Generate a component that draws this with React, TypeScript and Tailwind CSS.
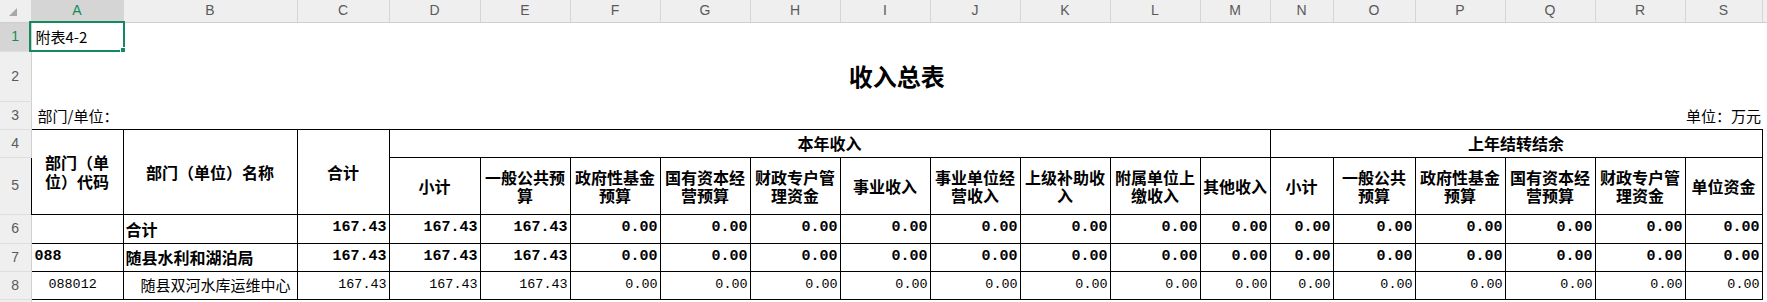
import React from 'react';

const colWidths = [
	'w-[31px]', 'w-[92px]', 'w-[174px]', 'w-[92px]', 'w-[91px]',
	'w-[90px]', 'w-[90px]', 'w-[90px]', 'w-[90px]', 'w-[90px]', 'w-[90px]', 'w-[90px]', 'w-[90px]',
	'w-[70px]', 'w-[63px]', 'w-[82px]', 'w-[90px]', 'w-[90px]', 'w-[90px]', 'w-[77px]', 'w-[5px]'
];

const letters = 'ABCDEFGHIJKLMNOPQRST'.split('');

const subHeads = [
	['小计'],
	['一般公共预', '算'],
	['政府性基金', '预算'],
	['国有资本经', '营预算'],
	['财政专户管', '理资金'],
	['事业收入'],
	['事业单位经', '营收入'],
	['上级补助收', '入'],
	['附属单位上', '缴收入'],
	['其他收入'],
	['小计'],
	['一般公共', '预算'],
	['政府性基金', '预算'],
	['国有资本经', '营预算'],
	['财政专户管', '理资金'],
	['单位资金']
];

const values = ['167.43', '167.43', '167.43', ...Array(14).fill('0.00')];

const rows = [
	{ code: '', name: '合计', bold: true, h: 'h-[29px]' },
	{ code: '088', name: '随县水利和湖泊局', bold: true, h: 'h-[28px]' },
	{ code: '088012', name: '随县双河水库运维中心', bold: false, h: 'h-[28px]' }
];

const cjk = "font-['Noto_Sans_CJK_SC',sans-serif]";
const mono = "font-['Liberation_Mono','Noto_Sans_CJK_SC',monospace]";
const cell = 'border border-black p-0';

function RowHead({ n, active }: { n?: number; active?: boolean }) {
	return (
		<td
			className={`border-r border-b border-r-[#cfcfcf] border-b-[#dedede] p-0 text-center align-middle font-['Liberation_Sans',sans-serif] text-[14px] ${
				active ? 'bg-[#d5d5d5] text-[#138a5e]' : 'bg-[#efefef] text-[#5a5a5a]'
			}`}
		>
			{n}
		</td>
	);
}

function Lines({ lines }: { lines: string[] }) {
	return (
		<>
			{lines.map((l, i) => (
				<div key={i}>{l}</div>
			))}
		</>
	);
}

export default function App() {
	return (
		<div className="relative h-[302px] w-[1767px] overflow-hidden bg-white text-black">
			<table className="w-[1767px] table-fixed border-collapse">
				<colgroup>
					{colWidths.map((w, i) => (
						<col key={i} className={w} />
					))}
				</colgroup>
				<tbody>
					<tr className="h-[22px]">
						<td className="border-r border-b border-r-[#d6d6d6] border-b-[#cfcfcf] bg-[#efefef] p-0">
							<div className="flex h-full items-center justify-center">
								<svg width="8" height="8" viewBox="0 0 8 8" className="ml-[-4px] mt-[2px]">
									<polygon points="8,0 8,8 0,8" fill="#a8a8a8" />
								</svg>
							</div>
						</td>
						{letters.map((l, i) => (
							<td
								key={l}
								className={`overflow-hidden border-r border-b border-r-[#d6d6d6] border-b-[#cfcfcf] p-0 text-center font-['Liberation_Sans',sans-serif] text-[14px] ${
									i === 0 ? 'bg-[#d5d5d5] text-[#138a5e]' : 'bg-[#efefef] text-[#5a5a5a]'
								}`}
							>
								{i < 19 ? l : ''}
							</td>
						))}
					</tr>

					<tr className="h-[29px]">
						<RowHead n={1} active />
						<td className={`p-0 pl-[4px] text-[15px] ${cjk}`}>附表4-2</td>
						<td colSpan={19} />
					</tr>

					<tr className="h-[50px]">
						<RowHead n={2} />
						<td colSpan={19} className={`p-0 text-center text-[24px] font-semibold ${cjk}`}>
							收入总表
						</td>
						<td />
					</tr>

					<tr className="h-[28px]">
						<RowHead n={3} />
						<td colSpan={2} className={`p-0 pl-[6px] pt-[2px] text-[15px] ${cjk}`}>
							部门/单位：
						</td>
						<td colSpan={16} />
						<td className={`whitespace-nowrap p-0 pr-[1px] pt-[2px] text-right text-[15px] ${cjk}`}>
							单位：万元
						</td>
						<td />
					</tr>

					<tr className="h-[28px]">
						<RowHead n={4} />
						<td rowSpan={2} className={`${cell} text-center text-[16px] font-bold leading-[19px] ${cjk}`}>
							<Lines lines={['部门（单', '位）代码']} />
						</td>
						<td rowSpan={2} className={`${cell} text-center text-[16px] font-bold ${cjk}`}>
							部门（单位）名称
						</td>
						<td rowSpan={2} className={`${cell} text-center text-[16px] font-bold ${cjk}`}>
							合计
						</td>
						<td colSpan={10} className={`${cell} text-center text-[16px] font-bold ${cjk}`}>
							本年收入
						</td>
						<td colSpan={6} className={`${cell} text-center text-[16px] font-bold ${cjk}`}>
							上年结转结余
						</td>
						<td />
					</tr>

					<tr className="h-[57px]">
						<RowHead n={5} />
						{subHeads.map((s, i) => (
							<td
								key={i}
								className={`${cell} text-center text-[16px] font-bold leading-[18px] ${cjk}`}
							>
								<Lines lines={s} />
							</td>
						))}
						<td />
					</tr>

					{rows.map((r, ri) => (
						<tr key={ri} className={r.h}>
							<RowHead n={6 + ri} />
							<td
								className={`${cell} text-left ${mono} ${
									r.bold ? 'pl-[3px] text-[15px] font-bold' : 'pl-[17px] text-[13.4px]'
								}`}
							>
								{r.code}
							</td>
							<td
								className={`${cell} whitespace-nowrap ${cjk} ${
									r.bold ? 'pl-[2px] text-left text-[16px] font-bold' : 'pl-[17px] text-left text-[15px]'
								}`}
							>
								{r.name}
							</td>
							{values.map((v, vi) => (
								<td
									key={vi}
									className={`${cell} pr-[2px] text-right ${mono} ${
										r.bold ? 'text-[15px] font-bold' : 'text-[13.4px]'
									}`}
								>
									{v}
								</td>
							))}
							<td />
						</tr>
					))}

					<tr className="h-[24px]">
						<RowHead />
						<td colSpan={20} />
					</tr>
				</tbody>
			</table>

			{/* active cell A1 */}
			<div className="absolute left-[29px] top-[21px] h-[31px] w-[96px] border-2 border-[#138a5e]" />
			<div className="absolute left-[120px] top-[47px] h-[6px] w-[6px] border border-white bg-[#138a5e]" />
		</div>
	);
}
